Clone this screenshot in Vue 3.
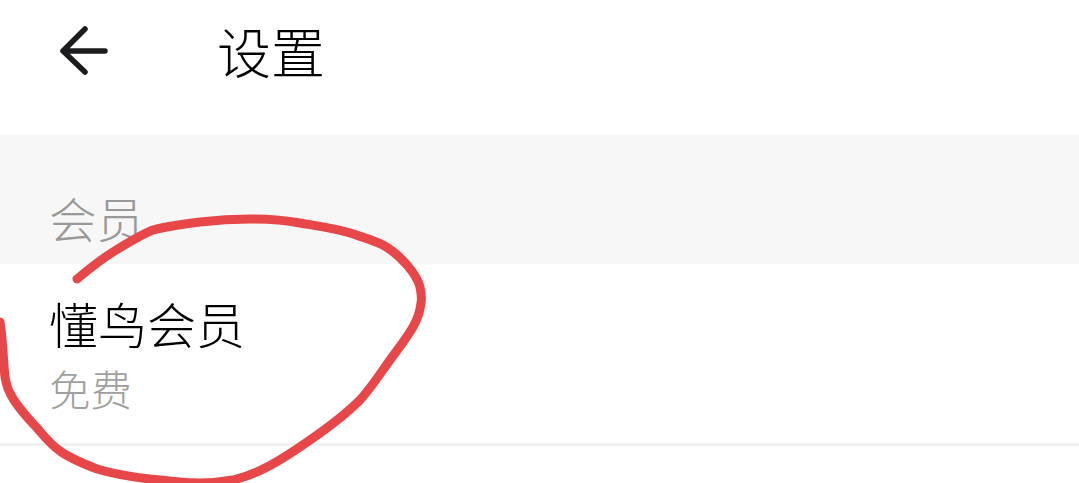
<script setup>
const ink = 'M77 279 C88 270 100 260 113 252 C126 244 140 235 153 230 C168 226 184 224 200 222 C217 220 233 219 250 219 C267 219 284 220 300 223 C318 226 334 228 350 233 C362 237 373 240 383 245 C392 250 400 257 407 265 C413 272 418 279 420 287 C421 292 422 298 421 303 C420 312 417 320 413 327 C406 339 398 349 390 360 C380 374 371 388 360 400 C348 412 334 423 320 433 C303 445 285 458 267 467 C256 473 245 477 233 480 C222 482 211 483 200 483 C183 483 167 481 150 479 C132 477 114 474 97 469 C84 464 71 459 60 451 C51 445 44 436 37 428 C27 417 16 406 10 393 C7 388 6 382 5 377 C3 358 3 340 0 322'
</script>

<template>
  <main class="screen">
    <header class="topbar">
      <svg class="back" viewBox="0 0 52 52" aria-hidden="true">
        <path d="M4 26H46M26 4L4 26L26 47" />
      </svg>
      <h1 class="title">设置</h1>
    </header>
    <section class="group">
      <h2 class="group-name">会员</h2>
    </section>
    <section class="row">
      <div class="row-title">懂鸟会员</div>
      <div class="row-sub">免费</div>
    </section>
    <svg class="ink" viewBox="0 0 1079 483" aria-hidden="true">
      <path :d="ink" />
    </svg>
  </main>
</template>

<style>
html, body { margin: 0; background: #fff; }
</style>

<style scoped>
.screen {
  position: relative;
  width: 1079px;
  height: 483px;
  overflow: hidden;
  background: #fff;
  font-family: "Noto Sans CJK SC", "Noto Sans", sans-serif;
  font-weight: 300;
}
.topbar {
  height: 135px;
  display: flex;
  align-items: flex-start;
  padding-left: 59px;
  box-sizing: border-box;
}
.back {
  width: 52px;
  height: 52px;
  margin-top: 25px;
  flex: none;
}
.back path {
  fill: none;
  stroke: #1c1c1e;
  stroke-width: 5.5;
  stroke-linecap: round;
  stroke-linejoin: round;
}
.title {
  margin: 15px 0 0 106px;
  font-size: 54px;
  line-height: 72px;
  font-weight: 300;
  color: #000;
}
.group {
  height: 129px;
  background: #f7f7f7;
  padding: 51px 0 0 49px;
  box-sizing: border-box;
}
.group-name {
  margin: 0;
  font-size: 47.5px;
  line-height: 64px;
  font-weight: 300;
  color: #999;
}
.row {
  height: 182px;
  padding: 26px 0 0 49px;
  box-sizing: border-box;
  border-bottom: 3px solid #f0f0f0;
}
.row-title {
  font-size: 49px;
  line-height: 66px;
  color: #000;
}
.row-sub {
  font-size: 41.5px;
  line-height: 58px;
  margin-top: 3px;
  color: #a0a0a0;
}
.ink {
  position: absolute;
  left: 0;
  top: 0;
  width: 1079px;
  height: 483px;
  pointer-events: none;
}
.ink path {
  fill: none;
  stroke: #e8474a;
  stroke-width: 9;
  stroke-linecap: round;
  stroke-linejoin: round;
}
</style>
